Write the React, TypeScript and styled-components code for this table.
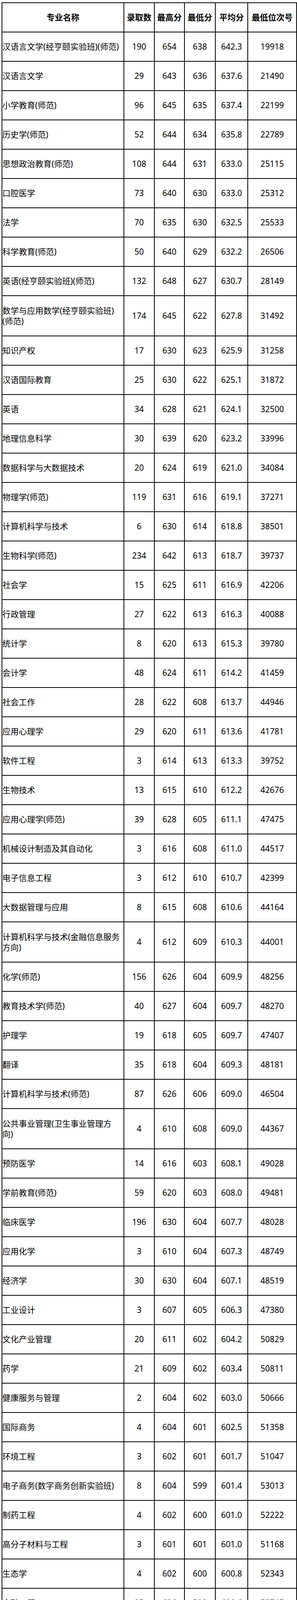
import React from "react";
import styled, { createGlobalStyle } from "styled-components";

const GlobalStyle = createGlobalStyle`
  html, body {
    margin: 0;
    padding: 0;
    background: #fff;
  }
  body {
    font-family: "Noto Sans", "Noto Sans CJK SC", sans-serif;
    color: #000;
  }
`;

// Whole sheet, top and left lines are drawn here, cells draw the rest
const Sheet = styled.div`
  margin: 6px 0 0 4px;
  width: 756px;
  border-top: 2px solid #000;
  border-left: 2px solid #000;
  box-sizing: border-box;
`;

const Row = styled.div<{ $tall?: boolean }>`
  display: grid;
  grid-template-columns: 312px 78px 77px 79px 83px 125px;
  height: ${(p) => (p.$tall ? "103px" : "75px")};
`;

const Cell = styled.div<{ $left?: boolean; $bold?: boolean }>`
  display: flex;
  align-items: center;
  justify-content: ${(p) => (p.$left ? "flex-start" : "center")};
  border-right: 2px solid #000;
  border-bottom: 2px solid #000;
  box-sizing: border-box;
  font-size: 21px;
  line-height: 27px;
  font-weight: ${(p) => (p.$bold ? 700 : 400)};
  white-space: nowrap;
  overflow: hidden;
`;

const NameText = styled.span`
  display: block;
`;

type Major = [string, string, string, string, string, string];

// "|" marks where the name wraps onto a second line
const majors: Major[] = [
  ["汉语言文学(经亨颐实验班)(师范)", "190", "654", "638", "642.3", "19918"],
  ["汉语言文学", "29", "643", "636", "637.6", "21490"],
  ["小学教育(师范)", "96", "645", "635", "637.4", "22199"],
  ["历史学(师范)", "52", "644", "634", "635.8", "22789"],
  ["思想政治教育(师范)", "108", "644", "631", "633.0", "25115"],
  ["口腔医学", "73", "640", "630", "633.0", "25312"],
  ["法学", "70", "635", "630", "632.5", "25533"],
  ["科学教育(师范)", "50", "640", "629", "632.2", "26506"],
  ["英语(经亨颐实验班)(师范)", "132", "648", "627", "630.7", "28149"],
  ["数学与应用数学(经亨颐实验班)|(师范)", "174", "645", "622", "627.8", "31492"],
  ["知识产权", "17", "630", "623", "625.9", "31258"],
  ["汉语国际教育", "25", "630", "622", "625.1", "31872"],
  ["英语", "34", "628", "621", "624.1", "32500"],
  ["地理信息科学", "30", "639", "620", "623.2", "33996"],
  ["数据科学与大数据技术", "20", "624", "619", "621.0", "34084"],
  ["物理学(师范)", "119", "631", "616", "619.1", "37271"],
  ["计算机科学与技术", "6", "630", "614", "618.8", "38501"],
  ["生物科学(师范)", "234", "642", "613", "618.7", "39737"],
  ["社会学", "15", "625", "611", "616.9", "42206"],
  ["行政管理", "27", "622", "613", "616.3", "40088"],
  ["统计学", "8", "620", "613", "615.3", "39780"],
  ["会计学", "48", "624", "611", "614.2", "41459"],
  ["社会工作", "28", "622", "608", "613.7", "44946"],
  ["应用心理学", "29", "620", "611", "613.6", "41781"],
  ["软件工程", "3", "614", "613", "613.3", "39752"],
  ["生物技术", "13", "615", "610", "612.2", "42676"],
  ["应用心理学(师范)", "39", "628", "605", "611.1", "47475"],
  ["机械设计制造及其自动化", "3", "616", "608", "611.0", "44517"],
  ["电子信息工程", "3", "612", "610", "610.7", "42399"],
  ["大数据管理与应用", "8", "615", "608", "610.6", "44164"],
  ["计算机科学与技术(金融信息服务|方向)", "4", "612", "609", "610.3", "44001"],
  ["化学(师范)", "156", "626", "604", "609.9", "48256"],
  ["教育技术学(师范)", "40", "627", "604", "609.7", "48270"],
  ["护理学", "19", "618", "605", "609.7", "47407"],
  ["翻译", "35", "618", "604", "609.3", "48181"],
  ["计算机科学与技术(师范)", "87", "626", "606", "609.0", "46504"],
  ["公共事业管理(卫生事业管理方|向)", "4", "610", "608", "609.0", "44367"],
  ["预防医学", "14", "616", "603", "608.1", "49028"],
  ["学前教育(师范)", "59", "620", "603", "608.0", "49481"],
  ["临床医学", "196", "630", "604", "607.7", "48028"],
  ["应用化学", "3", "610", "604", "607.3", "48749"],
  ["经济学", "30", "630", "604", "607.1", "48519"],
  ["工业设计", "3", "607", "605", "606.3", "47380"],
  ["文化产业管理", "20", "611", "602", "604.2", "50829"],
  ["药学", "21", "609", "602", "603.4", "50811"],
  ["健康服务与管理", "2", "604", "602", "603.0", "50666"],
  ["国际商务", "4", "604", "601", "602.5", "51358"],
  ["环境工程", "3", "602", "601", "601.7", "51047"],
  ["电子商务(数字商务创新实验班)", "8", "604", "599", "601.4", "53013"],
  ["制药工程", "4", "602", "600", "601.0", "52222"],
  ["高分子材料与工程", "3", "601", "601", "601.0", "51168"],
  ["生态学", "4", "602", "600", "600.8", "52343"],
  ["金融工程", "35", "606", "599", "600.6", "53745"],
  ["基础医学", "2", "599", "598", "598.5", "54262"],
  ["电子商务", "3", "598", "598", "598.0", "54271"],
  ["朝鲜语", "6", "600", "595", "597.3", "57847"],
  ["日语", "47", "614", "586", "596.4", "67491"],
  ["地理信息科学(中外合作办学)", "20", "618", "593", "600.8", "59908"],
  ["应用化学(中外合作办学)", "20", "593", "572", "581.8", "81821"],
  ["高分子材料与工程(中外合作办|学)", "19", "589", "556", "568.2", "100163"],
];

const headers = ["专业名称", "录取数", "最高分", "最低分", "平均分", "最低位次号"];

export default function App() {
  return (
    <>
      <GlobalStyle />
      <Sheet>
        <Row>
          {headers.map((h) => (
            <Cell key={h} $bold>
              {h}
            </Cell>
          ))}
        </Row>
        {majors.map(([name, count, high, low, avg, rank]) => {
          const lines = name.split("|");
          return (
            <Row key={name} $tall={lines.length > 1}>
              <Cell $left>
                <div>
                  {lines.map((l) => (
                    <NameText key={l}>{l}</NameText>
                  ))}
                </div>
              </Cell>
              <Cell>{count}</Cell>
              <Cell>{high}</Cell>
              <Cell>{low}</Cell>
              <Cell>{avg}</Cell>
              <Cell>{rank}</Cell>
            </Row>
          );
        })}
      </Sheet>
    </>
  );
}
